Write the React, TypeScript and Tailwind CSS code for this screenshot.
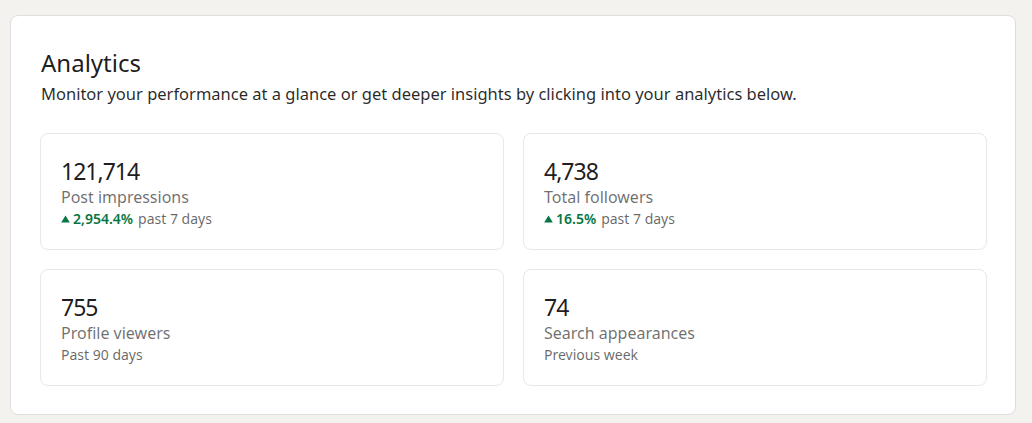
import React from 'react';

type Stat = {
    value: string;
    label: string;
    change?: string;
    note: string;
};

const stats: Stat[] = [
    { value: '121,714', label: 'Post impressions', change: '2,954.4%', note: 'past 7 days' },
    { value: '4,738', label: 'Total followers', change: '16.5%', note: 'past 7 days' },
    { value: '755', label: 'Profile viewers', note: 'Past 90 days' },
    { value: '74', label: 'Search appearances', note: 'Previous week' },
];

const UpArrow: React.FC = () => (
    <svg width="9" height="8" viewBox="0 0 9 8" className="mr-[3px] shrink-0" aria-hidden="true">
        <path d="M4.5 0.5 L8.8 7.5 L0.2 7.5 Z" fill="#057642" />
    </svg>
);

const StatCard: React.FC<{ stat: Stat }> = ({ stat }) => (
    <div className="rounded-[8px] border border-[#e8e8e8] bg-white px-[20px] pt-[22px] h-[117px]">
        <div className="text-[23px] leading-[30px] tracking-[-1px] text-[rgba(0,0,0,0.9)]">{stat.value}</div>
        <div className="text-[16px] leading-[22px] text-[rgba(0,0,0,0.58)]">{stat.label}</div>
        <div className="mt-[1px] flex items-center text-[14px] leading-[20px] text-[rgba(0,0,0,0.6)]">
            {stat.change && (
                <>
                    <UpArrow />
                    <span className="text-[#057642] font-semibold mr-[5px]">{stat.change}</span>
                </>
            )}
            <span>{stat.note}</span>
        </div>
    </div>
);

export default function App() {
    return (
        <div className="min-h-[423px] bg-[#f4f2ee] pl-[10px] pt-[15px] font-['Noto_Sans',sans-serif]">
            <div className="w-[1006px] rounded-[8px] border border-[#dfdeda] bg-white pl-[29px] pr-[28px] pt-[32px] pb-[28px]">
                <h2 className="pl-[1px] text-[24px] leading-[30px] text-[rgba(0,0,0,0.9)]">Analytics</h2>
                <p className="pl-[1px] mt-[4px] text-[16.5px] leading-[24px] text-[rgba(0,0,0,0.85)]">
                    Monitor your performance at a glance or get deeper insights by clicking into your analytics below.
                </p>
                <div className="mt-[27px] grid grid-cols-2 gap-x-[19px] gap-y-[19px]">
                    {stats.map(s => <StatCard key={s.label} stat={s} />)}
                </div>
            </div>
        </div>
    );
}
